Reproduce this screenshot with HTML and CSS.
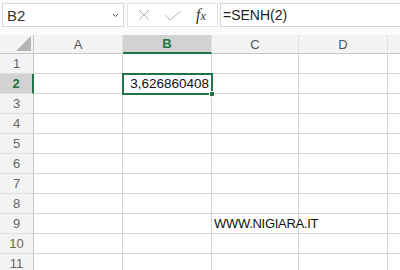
FILE: index.html
```html
<!DOCTYPE html>
<html lang="it">

<head>
    <meta charset="UTF-8">
    <meta name="viewport" content="width=device-width, initial-scale=1.0">
    <title>SENH</title>

    <link rel="stylesheet" href="styles.css">
</head>

<body>

    <div class="formula-bar">
        <div class="name-box">
            <span>B2</span>
            <svg class="name-box__arrow" width="7" height="5" viewBox="0 0 7 5">
                <path d="M1 1 L3.5 3.5 L6 1" fill="none" stroke="#555" stroke-width="1" />
            </svg>
        </div>
        <div class="formula-bar__buttons">
            <svg width="12" height="12" viewBox="0 0 12 12">
                <path d="M1 1 L11 11 M11 1 L1 11" stroke="#b5b5b5" stroke-width="1" fill="none" />
            </svg>
            <svg width="18" height="11" viewBox="0 0 18 11">
                <path d="M1 5 L6 10 L17 1" stroke="#b5b5b5" stroke-width="1" fill="none" />
            </svg>
            <span class="fx"><i>f</i><small>x</small></span>
        </div>
        <div class="formula-bar__input">=SENH(2)</div>
    </div>

    <div class="sheet">
        <div class="col-head corner"><span class="corner__triangle"></span></div>
        <div class="col-head">A</div>
        <div class="col-head is-active">B</div>
        <div class="col-head">C</div>
        <div class="col-head">D</div>
        <div class="col-head col-head--last"></div>

        <div class="row-head">1</div>
        <div class="cell"></div><div class="cell"></div><div class="cell"></div><div class="cell"></div><div class="cell"></div>

        <div class="row-head is-active">2</div>
        <div class="cell"></div>
        <div class="cell cell--num is-selected">3,626860408<span class="cell__handle"></span></div>
        <div class="cell"></div><div class="cell"></div><div class="cell"></div>

        <div class="row-head">3</div>
        <div class="cell"></div><div class="cell"></div><div class="cell"></div><div class="cell"></div><div class="cell"></div>

        <div class="row-head">4</div>
        <div class="cell"></div><div class="cell"></div><div class="cell"></div><div class="cell"></div><div class="cell"></div>

        <div class="row-head">5</div>
        <div class="cell"></div><div class="cell"></div><div class="cell"></div><div class="cell"></div><div class="cell"></div>

        <div class="row-head">6</div>
        <div class="cell"></div><div class="cell"></div><div class="cell"></div><div class="cell"></div><div class="cell"></div>

        <div class="row-head">7</div>
        <div class="cell"></div><div class="cell"></div><div class="cell"></div><div class="cell"></div><div class="cell"></div>

        <div class="row-head">8</div>
        <div class="cell"></div><div class="cell"></div><div class="cell"></div><div class="cell"></div><div class="cell"></div>

        <div class="row-head">9</div>
        <div class="cell"></div><div class="cell"></div>
        <div class="cell cell--text">WWW.NIGIARA.IT</div>
        <div class="cell"></div><div class="cell"></div>

        <div class="row-head">10</div>
        <div class="cell"></div><div class="cell"></div><div class="cell"></div><div class="cell"></div><div class="cell"></div>

        <div class="row-head">11</div>
        <div class="cell"></div><div class="cell"></div><div class="cell"></div><div class="cell"></div><div class="cell"></div>
    </div>

</body>

</html>
```

FILE: styles.css
```css
* {
    box-sizing: border-box;
}

body {
    margin: 0;
    background: #ffffff;
    font-family: "Liberation Sans", Arial, sans-serif;
    color: #222;
    overflow: hidden;
}

.formula-bar {
    display: flex;
    align-items: stretch;
    height: 35px;
    padding: 3px 0 8px 2px;
    background: #fbfbfb;
}

.name-box {
    display: flex;
    align-items: center;
    justify-content: space-between;
    width: 122px;
    padding: 0 4px 0 4px;
    border: 1px solid #d6d6d6;
    background: #fff;
    font-size: 15px;
    color: #333;
}

.formula-bar__buttons {
    display: flex;
    align-items: center;
    width: 91px;
    margin-left: 3px;
    padding-left: 10px;
    gap: 14px;
    border: 1px solid #e2e2e2;
    background: #fff;
}

.fx {
    font-family: "Liberation Serif", serif;
    font-size: 16px;
    color: #333;
}

.fx small {
    font-style: italic;
    font-size: 12px;
}

.formula-bar__input {
    flex: 1;
    display: flex;
    align-items: center;
    margin-left: 2px;
    padding-left: 2px;
    border: 1px solid #d6d6d6;
    border-right: none;
    background: #fff;
    font-size: 14px;
    color: #222;
}

.sheet {
    display: grid;
    grid-template-columns: 34px 89px 89px 87px 89px 1fr;
    grid-template-rows: 19px repeat(11, 20px);
}

.col-head {
    display: flex;
    align-items: center;
    justify-content: center;
    background: #f3f3f3;
    border-right: 1px solid #e0e0e0;
    border-bottom: 1px solid #c6c6c6;
    font-size: 13px;
    color: #555;
}

.col-head--last {
    border-right: none;
}

.col-head.is-active {
    background: #d2d2d2;
    border-bottom: 2px solid #217346;
    color: #217346;
    font-weight: 700;
}

.corner {
    position: relative;
    border-right: 1px solid #c6c6c6;
}

.corner__triangle {
    position: absolute;
    right: 2px;
    bottom: 2px;
    width: 0;
    height: 0;
    border-left: 15px solid transparent;
    border-bottom: 15px solid #b4b4b4;
}

.row-head {
    display: flex;
    align-items: center;
    justify-content: center;
    background: #f3f3f3;
    border-right: 1px solid #c6c6c6;
    border-bottom: 1px solid #e0e0e0;
    font-size: 13px;
    color: #666;
}

.row-head.is-active {
    background: #d2d2d2;
    border-right: 2px solid #217346;
    color: #217346;
    font-weight: 700;
}

.cell {
    border-right: 1px solid #d4d4d4;
    border-bottom: 1px solid #d4d4d4;
    font-size: 13.5px;
    line-height: 20px;
    white-space: nowrap;
    color: #111;
}

.cell:nth-child(6n) {
    border-right: none;
}

.cell--num {
    text-align: right;
    padding-right: 2px;
}

.cell--text {
    padding-left: 2px;
    font-size: 13px;
    letter-spacing: -0.3px;
}

.is-selected {
    position: relative;
    outline: 2px solid #217346;
    outline-offset: -1px;
}

.cell__handle {
    position: absolute;
    right: -4px;
    bottom: -4px;
    width: 6px;
    height: 6px;
    background: #217346;
    border: 1px solid #fff;
}
```
